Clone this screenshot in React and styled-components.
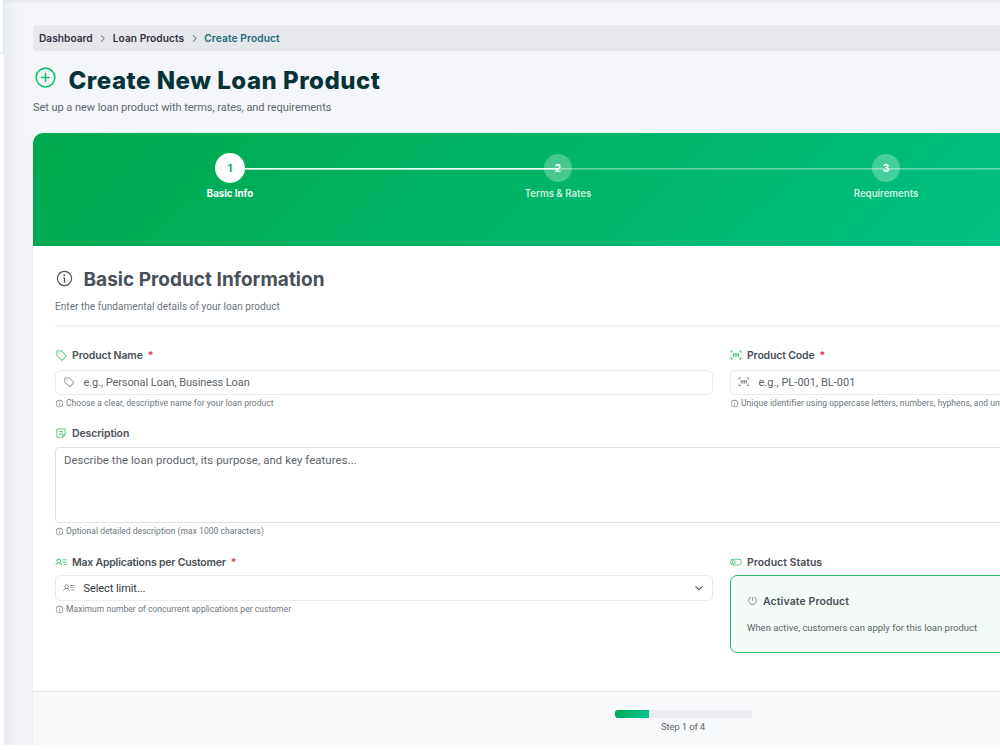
import React from 'react';
import styled, { createGlobalStyle } from 'styled-components';
import {
    PiCaretDown,
    PiCaretRight,
    PiInfo,
    PiNote,
    PiPlusCircle,
    PiPower,
    PiTag,
    PiToggleLeft,
    PiUserList
} from 'react-icons/pi';

const GlobalStyle = createGlobalStyle`
    * {
        box-sizing: border-box;
    }

    body {
        margin: 0;
        overflow: hidden;
        background: #fff;
        color: #495057;
        font-family: Roboto, "Liberation Sans", sans-serif;
    }
`;

const strong = 'Inter, "Liberation Sans", sans-serif';

const Page = styled.div`
    display: flex;
    width: 1000px;
    height: 750px;
    overflow: hidden;
`;

const Sidebar = styled.aside`
    flex: 0 0 4px;
    height: 750px;
    background: #fdfefe;
`;

const SidebarHeader = styled.div`
    height: 54px;
    border-right: 1px solid #dce8e9;
    border-bottom: 1px solid #dce8e9;
`;

const Main = styled.main`
    flex: 1;
    min-width: 0;
    height: 745px;
    overflow: hidden;
    padding: 25px 0 0 29px;
    background:
        linear-gradient(to bottom, rgba(60, 60, 90, 0.05), rgba(60, 60, 90, 0) 4px),
        linear-gradient(to right, rgba(60, 60, 90, 0.05), rgba(60, 60, 90, 0) 16px),
        #f5f6fa;
`;

const Breadcrumb = styled.nav`
    display: flex;
    align-items: center;
    width: 1377px;
    height: 26px;
    padding-left: 6px;
    border-radius: 4px;
    background: #e6e7eb;
    color: #6c757d;
    font-size: 10px;
`;

const Crumb = styled.span`
    color: ${props => props.$active ? '#1c6d78' : '#36313f'};
    font: 600 10.2px/14px ${strong};
    letter-spacing: ${props => props.$track || 0}px;
`;

const CrumbArrow = styled(PiCaretRight)`
    width: 9px;
    height: 9px;
    margin: 0 5.5px;
    stroke: currentColor;
    stroke-width: 10;
`;

const TitleRow = styled.div`
    display: flex;
    align-items: center;
    gap: 10.5px;
    height: 30px;
    margin-top: 14px;
`;

const TitleIcon = styled(PiPlusCircle)`
    width: 25px;
    height: 25px;
    margin-top: -5px;
    color: #12c26f;
`;

const Title = styled.h1`
    margin: 1px 0 0;
    color: #053338;
    font: 800 24px/30px ${strong};
    letter-spacing: 0.51px;
`;

const Subtitle = styled.p`
    margin: 6px 0 0;
    color: #5f666d;
    font-size: 11px;
    line-height: 14px;
    letter-spacing: -0.05px;
`;

const Card = styled.section`
    width: 1377px;
    margin-top: 18px;
    overflow: hidden;
    border-radius: 10px 10px 0 0;
    background: #fff;
    box-shadow: 0 0 3px rgba(0, 0, 0, 0.07);
`;

const Stepper = styled.ol`
    display: grid;
    grid-template-columns: repeat(4, 328px);
    height: 113px;
    margin: 0;
    padding: 20px 32px 0 33px;
    list-style: none;
    background: linear-gradient(135deg, #00a84c, #00c997);
`;

const Step = styled.li`
    position: relative;
    display: flex;
    flex-direction: column;
    align-items: center;
    gap: 4px;
`;

/* joins the centre of a step to the centre of the next one */
const StepLine = styled.span`
    position: absolute;
    top: 15px;
    left: ${props => props.$done ? '179px' : '50%'};
    width: ${props => props.$done ? '313px' : '328px'};
    height: 2px;
    background: linear-gradient(#fff 50%, rgba(255, 255, 255, 0.65) 50%);
    opacity: ${props => props.$done ? 0.95 : 0.38};
`;

const StepDot = styled.span`
    display: flex;
    align-items: center;
    justify-content: center;
    width: ${props => props.$active ? 30 : 28}px;
    height: ${props => props.$active ? 30 : 28}px;
    margin: ${props => props.$active ? 0 : '1px 0'};
    border-radius: 50%;
    background: ${props => props.$active ? '#fff' : 'rgba(255, 255, 255, 0.27)'};
    color: ${props => props.$active ? '#00a84f' : '#fff'};
    font: 700 10px/14px ${strong};
`;

const StepLabel = styled.span`
    color: ${props => props.$active ? '#fff' : 'rgba(255, 255, 255, 0.8)'};
    font: ${props => props.$active ? 700 : 600} 9.7px/14px ${strong};
    letter-spacing: ${props => props.$active ? 0 : -0.03}px;
`;

const Body = styled.div`
    height: 445px;
    padding: 21px 22px 0;
`;

const SectionHead = styled.header`
    height: 60px;
    margin-bottom: 21px;
    border-bottom: 2px solid #f3f4f6;
`;

const SectionTitle = styled.h2`
    display: flex;
    align-items: center;
    gap: 9.5px;
    margin: 0;
    font: 700 19px/26px ${strong};
    letter-spacing: 0.02px;

    svg {
        width: 19px;
        height: 19px;
        margin-top: -3px;
    }
`;

const SectionText = styled.p`
    margin: 7px 0 0;
    color: #6c757d;
    font-size: 10px;
    line-height: 14px;
    letter-spacing: 0.05px;
`;

const Grid = styled.div`
    display: grid;
    grid-template-columns: 658px 658px;
    column-gap: 17px;
`;

const Field = styled.div`
    grid-column: ${props => props.$wide ? '1 / -1' : 'auto'};
    min-width: 0;
    padding-bottom: ${props => props.$wide ? 18 : 17}px;
`;

const Label = styled.label`
    display: flex;
    align-items: center;
    height: 15px;
    margin-bottom: ${props => props.$gap}px;
    font: 600 10.5px/15px ${strong};
    letter-spacing: ${props => props.$track || 0}px;

    svg {
        width: 12px;
        height: 12px;
        margin: -2px 5px 0 0;
        color: #2dbf67;
    }
`;

const Required = styled.span`
    margin-left: 5px;
    color: #e5384a;
`;

const Control = styled.div`
    display: flex;
    align-items: center;
    height: ${props => props.$height || 25}px;
    padding: 0 8px;
    border: 1px solid #e9ecef;
    border-radius: 5px;
    background: #fff;
    color: ${props => props.$filled ? '#30373d' : '#5c6369'};
    font-size: 11px;
    letter-spacing: ${props => props.$track || 0}px;
`;

const ControlIcon = styled.span`
    display: flex;
    margin: -1px 9px 0 -1px;
    color: #7b838a;
    font-size: 11.5px;
`;

const Caret = styled(PiCaretDown)`
    width: 10px;
    height: 10px;
    margin-left: auto;
    stroke: currentColor;
    stroke-width: 12;
`;

const TextArea = styled.div`
    height: 76px;
    padding: 6px 8px;
    border: 1px solid #dfe2e5;
    border-radius: 4px;
    color: #5c6369;
    font-size: 11.3px;
    line-height: 14px;
    letter-spacing: 0.11px;
`;

const HintText = styled.small`
    display: flex;
    align-items: center;
    gap: 2px;
    height: 11px;
    margin-top: 3px;
    color: #6c757d;
    font-size: 8.5px;
    line-height: 11px;
    letter-spacing: ${props => props.$track || 0.05}px;
    white-space: nowrap;

    svg {
        width: 9px;
        height: 9px;
        margin-top: -1px;
    }
`;

const StatusBox = styled.div`
    height: 78px;
    padding: 18px 16px;
    border: 1px solid #2eb56b;
    border-radius: 7px;
    background: #f4faf6;
`;

const StatusTitle = styled.div`
    display: flex;
    align-items: center;
    gap: 5px;
    font: 600 10.5px/15px ${strong};
    letter-spacing: 0.1px;

    svg {
        width: 11px;
        height: 11px;
        margin-top: -2px;
        color: #6c757d;
    }
`;

const StatusText = styled.p`
    margin: 12px 0 0;
    color: #5b636a;
    font-size: 9.5px;
    line-height: 14px;
    letter-spacing: -0.02px;
`;

const Footer = styled.footer`
    display: flex;
    flex-direction: column;
    align-items: center;
    height: 80px;
    padding: 18px 77px 0 0;
    border-top: 1px solid #e6eaee;
    background: #f8f9fb;
`;

const Progress = styled.div`
    width: 137px;
    height: 8px;
    overflow: hidden;
    border-radius: 3px 0 0 3px;
    background: #eeebf1;
`;

const ProgressFill = styled.div`
    height: 100%;
    background: linear-gradient(135deg, #00a84f, #00c896);
`;

const ProgressText = styled.span`
    margin-top: 2px;
    color: #5f666d;
    font-size: 9.6px;
    line-height: 14px;
    letter-spacing: -0.2px;
`;

const steps = ['Basic Info', 'Terms & Rates', 'Requirements', 'Review'];
const current = 0;

const ScanIcon = () => (
    <svg width="1em" height="1em" viewBox="0 0 12 12" fill="none" stroke="currentColor" strokeWidth="0.9">
        <path d="M1 4V2h2M9 2h2v2M11 8v2H9M3 10H1V8" />
        <path d="M3.4 4.2v3.6M5.2 4.2v3.6M6.9 4.2v3.6M8.6 4.2v3.6" strokeWidth="1.1" />
    </svg>
);

const Hint = ({ children, track }) => (
    <HintText $track={track}>
        <PiInfo />
        <span>{children}</span>
    </HintText>
);

const FieldLabel = ({ icon: Icon, text, required, track, gap = 7 }) => (
    <Label $track={track} $gap={gap}>
        <Icon />
        {text}
        {required && <Required>*</Required>}
    </Label>
);

const App = () => (
    <Page>
        <GlobalStyle />
        <Sidebar>
            <SidebarHeader />
        </Sidebar>
        <Main>
            <Breadcrumb>
                <Crumb>Dashboard</Crumb>
                <CrumbArrow />
                <Crumb $track={0.04}>Loan Products</Crumb>
                <CrumbArrow />
                <Crumb $active $track={0.1}>Create Product</Crumb>
            </Breadcrumb>
            <TitleRow>
                <TitleIcon />
                <Title>Create New Loan Product</Title>
            </TitleRow>
            <Subtitle>Set up a new loan product with terms, rates, and requirements</Subtitle>

            <Card>
                <Stepper>
                    {steps.map((name, index) => (
                        <Step key={name}>
                            {index < steps.length - 1 && <StepLine $done={index === current} />}
                            <StepDot $active={index === current}>{index + 1}</StepDot>
                            <StepLabel $active={index === current}>{name}</StepLabel>
                        </Step>
                    ))}
                </Stepper>

                <Body>
                    <SectionHead>
                        <SectionTitle><PiInfo />Basic Product Information</SectionTitle>
                        <SectionText>Enter the fundamental details of your loan product</SectionText>
                    </SectionHead>

                    <Grid>
                        <Field>
                            <FieldLabel icon={PiTag} text="Product Name" required track={-0.12} />
                            <Control $track={-0.09}>
                                <ControlIcon><PiTag /></ControlIcon>
                                e.g., Personal Loan, Business Loan
                            </Control>
                            <Hint>Choose a clear, descriptive name for your loan product</Hint>
                        </Field>
                        <Field>
                            <FieldLabel icon={ScanIcon} text="Product Code" required track={-0.16} />
                            <Control $track={0.03}>
                                <ControlIcon><ScanIcon /></ControlIcon>
                                e.g., PL-001, BL-001
                            </Control>
                            <Hint track={0.07}>Unique identifier using uppercase letters, numbers, hyphens, and underscores only</Hint>
                        </Field>
                        <Field $wide>
                            <FieldLabel icon={PiNote} text="Description" track={-0.12} gap={6} />
                            <TextArea>Describe the loan product, its purpose, and key features...</TextArea>
                            <Hint track={0.04}>Optional detailed description (max 1000 characters)</Hint>
                        </Field>
                        <Field>
                            <FieldLabel icon={PiUserList} text="Max Applications per Customer" required track={-0.21} gap={5} />
                            <Control $filled $height={26} $track={-0.07}>
                                <ControlIcon><PiUserList /></ControlIcon>
                                Select limit...
                                <Caret />
                            </Control>
                            <Hint>Maximum number of concurrent applications per customer</Hint>
                        </Field>
                        <Field>
                            <FieldLabel icon={PiToggleLeft} text="Product Status" gap={5} />
                            <StatusBox>
                                <StatusTitle><PiPower />Activate Product</StatusTitle>
                                <StatusText>When active, customers can apply for this loan product</StatusText>
                            </StatusBox>
                        </Field>
                    </Grid>
                </Body>

                <Footer>
                    <Progress>
                        <ProgressFill style={{ width: `${(current + 1) / steps.length * 100}%` }} />
                    </Progress>
                    <ProgressText>Step {current + 1} of {steps.length}</ProgressText>
                </Footer>
            </Card>
        </Main>
    </Page>
);

export default App;
